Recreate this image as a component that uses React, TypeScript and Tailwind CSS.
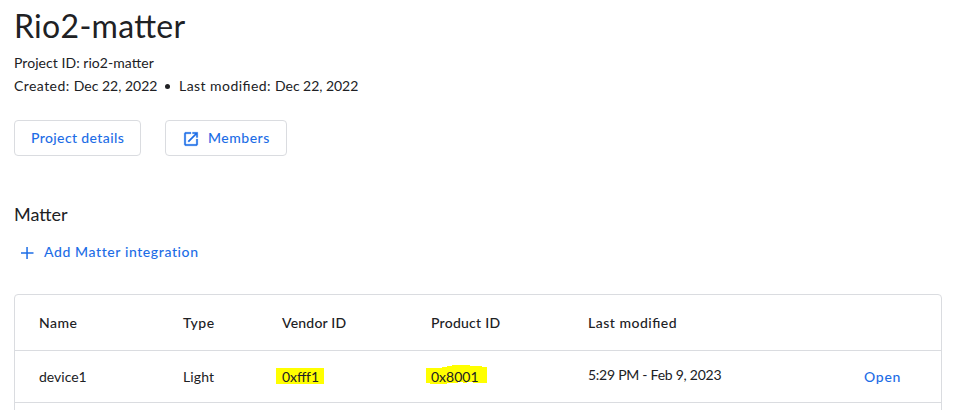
function OpenInNewIcon() {
  return (
    <svg className="mt-[2px]" width="18" height="18" viewBox="0 0 24 24" fill="currentColor" stroke="currentColor" strokeWidth="0.4" aria-hidden="true">
      <path d="M19 19H5V5h7V3H5c-1.11 0-2 .9-2 2v14c0 1.1.89 2 2 2h14c1.1 0 2-.9 2-2v-7h-2v7zM14 3v2h3.59l-9.83 9.83 1.41 1.41L19 6.41V10h2V3h-7z" />
    </svg>
  );
}

function PlusIcon() {
  return (
    <svg className="mt-[2px]" width="18" height="18" viewBox="0 0 18 18" fill="currentColor" aria-hidden="true">
      <path d="M8.3 3h1.5v5.2H15.5v1.6H9.8V15H8.3V9.8H3V8.2h5.3z" />
    </svg>
  );
}

const liga = "[font-feature-settings:'liga'_1]";

export default function App() {
  return (
    <main className="h-[410px] w-[964px] overflow-hidden bg-white pl-[14px] font-[Lato,sans-serif] text-[14px] leading-5 whitespace-nowrap text-[#202124]">
      <h1 className={`pt-[6px] text-[32px] leading-10 tracking-[0.3px] ${liga}`}>Rio2-matter</h1>
      <p className={`mt-[7px] tracking-[0.05px] ${liga}`}>Project ID: rio2-matter</p>
      <div className="mt-[3px] flex items-center">
        <span className="w-[151px]">
          <span className="tracking-[0.45px]">Created: </span>Dec 22, 2022
        </span>
        <span className="mr-[9px] size-[5px] rounded-full bg-[#202124]" />
        <span>
          <span className={`tracking-[0.45px] ${liga}`}>Last modified: </span>
          <span className="tracking-[-0.05px]">Dec 22, 2022</span>
        </span>
      </div>

      <div className="mt-6 flex gap-6 font-medium text-[#1d6de6]">
        <button className="h-9 w-[127px] rounded border border-[#dadce0] pl-4 text-left tracking-[0.38px]">
          Project details
        </button>
        <button className="flex h-9 w-[122px] items-center gap-[8px] rounded border border-[#dadce0] pl-[16px] tracking-[0.5px]">
          <OpenInNewIcon />
          Members
        </button>
      </div>

      <h2 className="mt-[46px] text-[18px] leading-6">Matter</h2>
      <button className="mt-[16px] flex h-5 items-center gap-[8px] pl-1 font-medium tracking-[0.6px] text-[#1d6de6]">
        <PlusIcon />
        Add Matter integration
      </button>

      <section className="mt-[32px] h-[130px] w-[928px] rounded border border-[#dadce0]">
        <div className="grid h-[56px] grid-cols-[144px_98px_150px_157px_276px_1fr] items-center border-b border-[#dadce0] pl-6 font-medium">
          <span className="tracking-[0.5px]">Name</span>
          <span className="tracking-[0.5px]">Type</span>
          <span className="pl-px tracking-[0.2px]">Vendor ID</span>
          <span className="tracking-[0.25px]">Product ID</span>
          <span className={`tracking-[0.5px] ${liga}`}>Last modified</span>
        </div>
        <div className="grid h-[52px] grid-cols-[144px_98px_150px_157px_276px_1fr] items-center border-b border-[#dadce0] pl-6">
          <span>device1</span>
          <span className="tracking-[0.1px]">Light</span>
          <span className="relative z-0 pl-px tracking-[-0.1px] [font-feature-settings:'liga'_1]">
            <span className="absolute top-[1px] -left-[5px] -z-10 h-4 w-12 bg-[#ffff00]" />
            0xfff1
          </span>
          <span className="relative z-0">
            <svg className="absolute -top-[3px] -left-[5px] -z-10" width="62" height="21" viewBox="0 0 62 21" fill="#ffff00" aria-hidden="true">
              <path d="M0 4H16V3H21V2H26V1H44V2H56V3H61V19H47V18H41V19H37V18H32V19H21V20H4V19H0Z" />
            </svg>
            0x8001
          </span>
          <span className="-mt-[3px] tracking-[-0.26px]">5:29 PM - Feb 9, 2023</span>
          <button className="text-left font-medium tracking-[0.7px] text-[#1d6de6]">Open</button>
        </div>
      </section>
    </main>
  );
}
